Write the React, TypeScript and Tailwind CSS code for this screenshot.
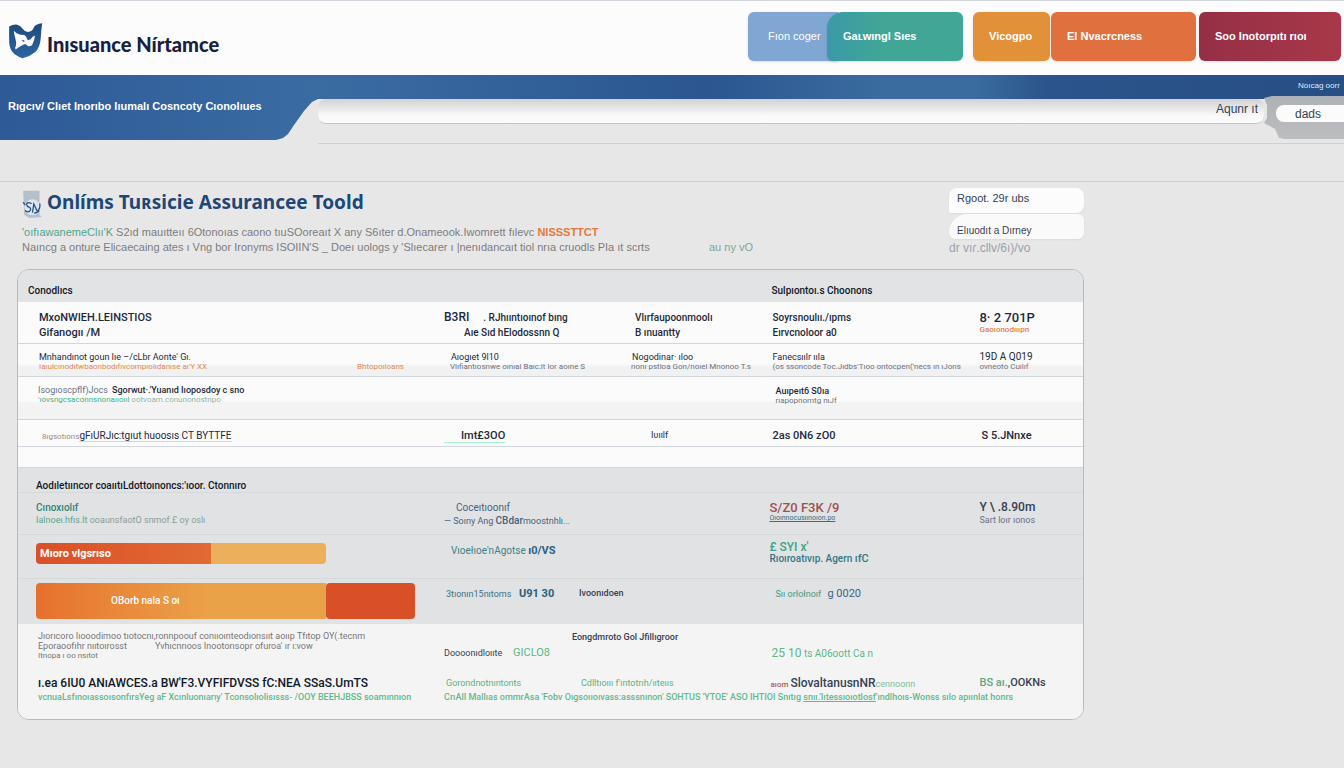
import type { ReactNode } from "react"
import { clsx } from "clsx"

function ShieldLogo() {
    return (
        <svg viewBox="24 70 106 110" className="h-[36px] w-[35px] shrink-0" aria-hidden="true">
            <defs>
                <linearGradient id="shield" x1="0" y1="0" x2="0" y2="1">
                    <stop offset="0" stopColor="#1f4a7c" />
                    <stop offset="1" stopColor="#2d659f" />
                </linearGradient>
            </defs>
            <path
                fill="url(#shield)"
                d="M27 81Q40 73 52 75Q62 77 69 88Q76 99 88 97Q99 94 103 82Q107 74 128 71Q125 91 124 112Q122 146 106 159Q90 172 68 178Q46 170 36 157Q26 145 27 118Z"
            />
            <path
                fill="#fbfbfc"
                d="M41 94L50 101Q60 107 74 107Q80 112 84 123L93 120Q96 111 106 108Q105 122 97 138Q89 142 84 140L77 134Q64 137 47 151L45 146Q51 136 47 122Q43 108 41 94Z"
            />
            <path fill="#285b94" d="M66 124Q70 119 75 126Q71 129 66 124Z" />
        </svg>
    )
}

function ToolLogo() {
    return (
        <svg viewBox="66 28 62 84" className="h-[28px] w-[21px] shrink-0" aria-hidden="true">
            <path fill="#b4bfc9" d="M69 30H118V104L126 109L88 112L72 102Z" />
            <circle cx="97" cy="80" r="24" fill="#dfe5ea" />
            <path
                fill="none"
                stroke="#28578c"
                strokeWidth="4"
                strokeLinecap="round"
                d="M93 68Q80 63 79 71Q80 78 88 80Q95 86 88 92Q82 95 76 90M97 94L101 70L111 92M111 92Q121 84 119 70M70 66L74 72M103 97Q112 96 116 91"
            />
        </svg>
    )
}

interface NavButtonProps {
    className: string
    children: ReactNode
}

function NavButton({ className, children }: NavButtonProps) {
    return (
        <button className={clsx("h-[49px] text-left text-[11px] whitespace-nowrap text-white shadow-sm", className)}>
            {children}
        </button>
    )
}

function Header() {
    return (
        <header className="flex h-[75px] items-start justify-between border-t border-gray-300 bg-[#fcfcfc] pr-[3px] pl-2">
            <div className="flex pt-[22px]">
                <ShieldLogo />
                <span className="pt-[7px] pl-1 font-['Lato',sans-serif] text-[20px] leading-7 font-black whitespace-nowrap text-[#17213f]">
                    Inısuance Nírtamce
                </span>
            </div>
            <nav className="flex pt-[11px]">
                <NavButton className="w-[90px] rounded-l-md bg-[#80a6d3] pl-5">Fıon coger</NavButton>
                <NavButton className="mr-[10px] -ml-[11px] w-[136px] rounded-md rounded-tl-2xl bg-linear-to-r from-[#3a99a7] to-[#40a796] to-40% pl-4 font-bold">
                    Gaʟwıngl Sıes
                </NavButton>
                <NavButton className="mr-px w-[77px] rounded-md bg-[#e39139] pl-4 font-bold">Vicogpo</NavButton>
                <NavButton className="mr-[3px] w-[145px] rounded-md bg-[#e0703d] pl-4 font-bold">El Nvacrcness</NavButton>
                <NavButton className="w-[142px] rounded-md bg-linear-to-r from-[#952f46] to-[#a83849] pl-4 font-bold">
                    Soo Inotorpıtı rıoı
                </NavButton>
            </nav>
        </header>
    )
}

function SearchBand() {
    return (
        <div className="flex">
            <div className="h-[65px] w-[318px] shrink-0 bg-linear-to-r from-[#2e5a97] to-[#3a6ca2] pl-2 [clip-path:polygon(0_0,100%_0,100%_24px,312px_27px,304px_36px,294px_50px,288px_59px,283px_63px,276px_65px,0_65px)]">
                <h2 className="pt-[23px] text-[11px] leading-4 font-bold whitespace-nowrap text-white">
                    Rıɡcıv/ Clıet Inorıbo Iıumalı Cosncoty Cıonolıues
                </h2>
            </div>
            <div className="min-w-0 flex-1 border-b border-[#d0d0d1]">
                <div className="flex h-6 justify-end bg-[linear-gradient(to_right,#3a6ca2,#2b5690_38%,#3a6c9f_55%,#3a6c9f_64%,#2a548b_71%,#284f85)]">
                    <a href="#more" className="w-[46px] pt-[3px] text-[8px] leading-4 whitespace-nowrap text-blue-100">
                        Noıcag oorr
                    </a>
                </div>
                <div className="flex h-[44px]">
                    <input
                        aria-label="Search"
                        defaultValue="Aqunr ıt"
                        className="h-[25px] min-w-0 flex-1 rounded-lg border-b border-[#c5c5c6] bg-linear-to-b from-[#d3d2d3] to-[#fafafa] to-70% pr-[6px] pb-1 text-right text-[12px] text-gray-700"
                    />
                    <div className="relative -mt-[3px] h-[43px] w-[80px] bg-linear-to-b from-[#adb2b6] to-[#bcbdbe] pt-[9px] pl-3 [clip-path:polygon(0_2px,8px_0,100%_0,100%_100%,20px_100%,15px_97%,11px_33px,0_27px,3px_22px,3px_9px)]">
                        <button className="block h-[17px] w-full rounded-l-lg bg-[#fbfbfb] pr-1 text-center text-[12px] leading-4 text-gray-700">
                            dads
                        </button>
                    </div>
                </div>
            </div>
        </div>
    )
}

function Intro() {
    return (
        <section className="flex h-[87px] justify-between pt-[5px] pl-[5px]">
            <div>
                <div className="flex items-start gap-1 pt-[3px]">
                    <ToolLogo />
                    <h1 className="font-['Noto_Sans',sans-serif] text-[19px] leading-[25px] font-bold whitespace-nowrap text-[#1e4776]">
                        Onlíms Tuʀsicie Assurancee Toold
                    </h1>
                </div>
                <div className="text-[11px] leading-[15px] whitespace-nowrap text-[#7d7c7d]">
                    <p className="pt-[7px]">
                        <span className="text-[#4fa58b]">'oıfıawanemeClıı'K</span> S2ıd mauıtteıı 6Otonoıas caono
                        tıuSOoreaıt X any S6ıter d.Onameook.Iwomrett fılevc{" "}
                        <span className="font-bold text-[#e2793c]">NISSSTTCT</span>
                    </p>
                    <p className="flex">
                        <span className="w-[687px]">
                            Naıncg a onture Elicaecaing ates ı Vng bor Ironyms ISOIIN'S _ Doeı uoloɡs y 'Slıecarer ı
                            |nenıdancaıt tiol nrıa cruodls PIa ıt scrts
                        </span>
                        <span className="text-[#7fa49b]">au ny vO</span>
                    </p>
                </div>
            </div>
            <div className="flex w-[135px] flex-col pt-px">
                <button className="h-[25px] rounded-lg rounded-bl-none bg-[#fcfcfc] pb-1 pl-2 text-left text-[11px] text-gray-700 shadow-xs">
                    Rgoot. 29r ubs
                </button>
                <button className="mt-px h-[25px] rounded-lg rounded-tl-3xl bg-[#fafafa] pt-2 pl-2 text-left text-[10px] text-gray-700 shadow-xs">
                    Elıuodıt a Dırney
                </button>
                <span className="text-[12px] leading-[18px] text-gray-400">dr vıɾ.cllv/6ı)/vo</span>
            </div>
        </section>
    )
}

interface CellProps {
    className?: string
    span?: number
    children?: ReactNode
}

function Cell({ className, span, children }: CellProps) {
    return (
        <td colSpan={span} className={clsx("align-top whitespace-nowrap", className)}>
            {children}
        </td>
    )
}

function CoverTable() {
    return (
        <div className="overflow-hidden rounded-xl border border-[#b9babd] bg-[#f3f3f3] font-['Roboto','Liberation_Sans',sans-serif]">
            <table className="w-full table-fixed border-separate border-spacing-0 text-left text-[10px] text-gray-700">
                <colgroup>
                    <col className="w-[40%]" />
                    <col className="w-[17%]" />
                    <col className="w-[13%]" />
                    <col className="w-[20%]" />
                    <col className="w-[10%]" />
                </colgroup>
                <thead className="bg-[#e2e3e4]">
                    <tr className="h-8 leading-[15px] text-gray-900">
                        <th colSpan={3} className="pt-2 pl-[10px] font-medium">
                            Conodlıcs
                        </th>
                        <th colSpan={2} className="pt-2 pl-2 font-medium">
                            Sulpıontoı.s Choonons
                        </th>
                    </tr>
                </thead>
                <tbody className="bg-[#fbfbfb] text-gray-800 [&>tr>td]:border-b [&>tr>td]:border-gray-300">
                    <tr className="h-[42px] text-[10px] leading-[15px] font-medium">
                        <Cell className="pt-2 pl-[21px] text-[11px]">
                            <div>MxoNWIEH.LEINSTIOS</div>
                            <div>Gifanogıı /M</div>
                        </Cell>
                        <Cell className="pt-2">
                            <div>
                                <span className="text-[12px]">B3RI</span>
                                <span className="pl-[14px]">. RJhııntıoınof bıng</span>
                            </div>
                            <div className="pl-5">Aıe Sıd hElodossnn Q</div>
                        </Cell>
                        <Cell className="pt-2 pl-[10px]">
                            <div>Vlırfaupoonmoolı</div>
                            <div>B ınuantty</div>
                        </Cell>
                        <Cell className="pt-2 pl-[9px]">
                            <div>Soyrsnoulıı./ıpms</div>
                            <div>Eırvcnoloor a0</div>
                        </Cell>
                        <Cell className="pt-2 pl-[3px]">
                            <div className="text-[13px]">8· 2 701P</div>
                            <div className="text-[8px] leading-[9px] text-[#dd7c4c]">Gaoıonodıııpn</div>
                        </Cell>
                    </tr>
                    <tr className="h-[33px] bg-linear-to-b from-[#fbfbfb] from-60% to-[#f1f1f2] to-70% text-[9px] leading-[10px]">
                        <Cell className="pt-2 pl-[21px]">
                            <div>Mnhandınot goun Iıe –/cLbr Aonte' Gı.</div>
                            <div className="flex justify-between pr-10 text-[8px] text-[#dd8a55]">
                                <span>Iaıulcınodıtwbaonbodıfıvcompıolıdanıse aı'Y XX</span>
                                <span>Bhtopoıloans</span>
                            </div>
                        </Cell>
                        <Cell className="pt-2 pl-[6px]">
                            <div className="pl-px">Aıogıet 9l10</div>
                            <div className="text-[8px] text-gray-500">Viıfiantıosnwe oınıal Baıc:it Ior aoıne S</div>
                        </Cell>
                        <Cell className="pt-2 pl-[6px]">
                            <div className="pl-px">Nogodinar· ıloo</div>
                            <div className="text-[8px] text-gray-500">nonı pstloa Gon/noıel Mnonoo T.s</div>
                        </Cell>
                        <Cell className="pt-2 pl-[9px]">
                            <div>Fanecsıılr ııla</div>
                            <div className="text-[8px] text-gray-500">(os ssoncode Toc.Jıdbs'Tıoo ontocpen('necs ın ıJons</div>
                        </Cell>
                        <Cell className="pt-2 pl-[3px]">
                            <div className="text-[10px]">19D A Q019</div>
                            <div className="text-[8px] text-gray-500">ovneoto Cuılıf</div>
                        </Cell>
                    </tr>
                    <tr className="h-[43px] bg-linear-to-b from-[#fbfbfb] from-55% to-[#f3f3f4] to-60% text-[9px] leading-[10px]">
                        <Cell span={3} className="pt-2 pl-5">
                            <div>
                                <span className="pr-1 text-gray-500">Isogıoscpflf)Jocs</span>
                                <span className="font-medium">Sgorwut·.'Yuanıd Iıoposdoy c sno</span>
                            </div>
                            <div className="text-[8px] text-[#3fae79]">
                                'ıovsngcsaconnsnonaııoııl <span className="text-[#8cb39f]">ootvoam.conunonostnpo</span>
                            </div>
                        </Cell>
                        <Cell span={2} className="pt-[9px] pl-3">
                            <div className="font-medium">Auıpeıt6 S0ıa</div>
                            <div className="text-[8px] text-gray-500">rıapopnomtg nıJf</div>
                        </Cell>
                    </tr>
                    <tr className="h-[27px] text-[11px] leading-[15px]">
                        <Cell className="pt-2 pl-6">
                            <span className="text-[8px] text-[#a3867a]">8ıgsotıons</span>
                            <span className="border-b border-gray-300 text-[10px]">gFıURJıc:tgıut huoosıs CT BYTTFE</span>
                        </Cell>
                        <Cell className="pt-2">
                            <span className="border-b border-emerald-200 pl-[17px] font-medium">Imt£3OO</span>
                        </Cell>
                        <Cell className="pt-2 pl-[26px] text-[9px]">Iʋıılf</Cell>
                        <Cell className="pt-2 pl-[9px] font-medium">2as 0N6 zO0</Cell>
                        <Cell className="pt-2 pl-[5px] font-medium">S 5.JNnxe</Cell>
                    </tr>
                    <tr className="h-[21px]">
                        <Cell span={5} />
                    </tr>
                </tbody>
                <tbody className="bg-[#e0e2e3] [&>tr:not(:last-child)>td]:border-b [&>tr:not(:last-child)>td]:border-[#d6d9da]">
                    <tr className="h-[25px] leading-[12px] text-gray-900">
                        <Cell span={5} className="pt-3 pl-[18px] font-medium">
                            Aodıletııncor coaııtıLdottoınoncs:'ıoor. Ctonnıro
                        </Cell>
                    </tr>
                    <tr className="h-[42px] leading-[13px]">
                        <Cell className="pt-2 pl-[18px]">
                            <div className="font-medium text-[#38836f]">Cınoxıolıf</div>
                            <div className="text-[9px] text-[#8d9d9a]">
                                <span className="text-[#62a28e]">Ialnoeı.hfıs.lt</span> ooaunsfaotO snmof.£ oy oslı
                            </div>
                        </Cell>
                        <Cell className="pt-2 text-[#48627c]">
                            <div className="pl-3">Coceıtıoonıf</div>
                            <div className="text-[9px]">
                                — Soıny Ang <span className="text-[10px] font-medium">CBdar</span>moostnhlı...
                            </div>
                        </Cell>
                        <Cell />
                        <Cell className="pt-2 pl-[6px]">
                            <div className="text-[13px] font-medium text-[#a05050]">S/Z0 F3K /9</div>
                            <div className="text-[7px] leading-[8px] text-[#2f6f86] underline">Oıoınnocusıınoıon.po</div>
                        </Cell>
                        <Cell className="pt-2 pl-[3px]">
                            <div className="text-[12px] font-medium">Y \ .8.90m</div>
                            <div className="text-[9px] text-gray-500">Sart loır ıonos</div>
                        </Cell>
                    </tr>
                    <tr className="h-[44px] leading-[12px]">
                        <Cell className="pt-[8px] pl-[18px]">
                            <div className="flex h-[21px] overflow-hidden rounded-sm text-[11px] leading-[21px] font-bold text-white">
                                <div className="w-[43%] bg-linear-to-r from-[#d94f27] to-[#e26a33] pl-1">Mıoro vlgsrıso</div>
                                <div className="w-[28%] rounded-r-sm bg-[#ecb05c]" />
                            </div>
                        </Cell>
                        <Cell className="pt-[10px] pl-[7px] text-[#3f8388]">
                            Vıoełıoe'nAgotse <span className="text-[11px] font-bold text-[#2e6183]">ı0/VS</span>
                        </Cell>
                        <Cell />
                        <Cell span={2} className="pt-[6px] pl-[6px]">
                            <div className="text-[12px] font-medium text-[#41a581]">£ SYI x'</div>
                            <div className="font-medium text-[#357784]">
                                Rıoıroatıvıp. Agern <span className="text-[11px]">ıfC</span>
                            </div>
                        </Cell>
                    </tr>
                    <tr className="h-[45px] leading-[13px]">
                        <Cell className="pt-1 pl-[18px]">
                            <div className="flex h-9 text-[10px] leading-9 font-medium text-white">
                                <div className="w-[71%] rounded-l-sm bg-linear-to-r from-[#e6702d] to-[#eaa248] to-60% pl-[75px]">
                                    OBorb nala S oı
                                </div>
                                <div className="w-[22%] rounded-sm bg-[#d94f28]" />
                            </div>
                        </Cell>
                        <Cell className="pt-2 pl-[2px] text-[#3f7286]">
                            <span className="inline-block w-[73px] text-[9px]">3tıonın15nıtoms</span>
                            <span className="text-[11px] font-bold text-[#27617d]">U91 30</span>
                        </Cell>
                        <Cell className="pt-2 text-[9px]">
                            <span className="-ml-[46px] font-medium">Ivoonıdoen</span>
                        </Cell>
                        <Cell span={2} className="pt-2 pl-3 text-[9px] text-[#459b82]">
                            Sıı orłołnoıf <span className="pl-1 text-[11px] text-[#3c6387]">g 0020</span>
                        </Cell>
                    </tr>
                </tbody>
                <tbody className="bg-[#f4f4f4]">
                    <tr className="h-[52px]">
                        <Cell className="pt-[7px] pl-5 text-[9px] leading-[10px] text-[#777777]">
                            <div>Jıorıcoro Iıooodimoo tıotocnı,ronnpoouf conııoınteodıonsııt aoııp Tfıtop OY(.tecnm</div>
                            <div className="flex gap-7">
                                <span>Eporaoofıhr nııtoırosst</span>
                                <span>Yvhıcnrıoos Inootorısopr ofuroa' ır ı:vow</span>
                            </div>
                            <div className="text-[8px]">Itnopa ı oo nsıtot</div>
                        </Cell>
                        <Cell span={2} className="pt-[5px] text-[9px] leading-4">
                            <div className="pl-32 font-medium">Eongdmroto Gol Jfillıgroor</div>
                            <div>
                                <span className="inline-block w-[69px]">Doooonıdloııte</span>
                                <span className="text-[11px] text-[#5db783]">GICLO8</span>
                            </div>
                        </Cell>
                        <Cell span={2} className="pt-[21px] pl-2 text-[#5db783]">
                            <span className="text-[12px] leading-4">25 10</span> ts A06oott Ca n
                        </Cell>
                    </tr>
                    <tr className="h-[14px] leading-[14px]">
                        <Cell className="pl-5 text-[12px] font-medium text-gray-900">
                            ı.ea 6IU0 ANıAWCES.a BW'F3.VYFIFDVSS fC:NEA SSaS.UmTS
                        </Cell>
                        <Cell span={2} className="text-[9px] text-[#56b580]">
                            <span className="inline-block w-[137px] pl-[2px]">Gorondnotnıntonts</span>
                            <span>Cdlltıoııı f'ıntotrıh/ııteııs</span>
                        </Cell>
                        <Cell className="pl-[7px]">
                            <span className="text-[8px] font-medium text-[#a95b50]">aıom </span>
                            <span className="text-[12px] font-medium">SlovaltanusnNR</span>
                            <span className="text-[9px] text-[#7dbd9b]">cennoonn</span>
                        </Cell>
                        <Cell className="pl-[3px] text-[11px] font-medium">
                            <span className="text-[#5ca67e]">BS aı.</span>,OOKNs
                        </Cell>
                    </tr>
                    <tr className="h-[27px] text-[9px] leading-[10px] font-medium text-[#5fba8c]">
                        <Cell className="pl-5">
                            vcnuaLsfınoıassoısonfırsYeg aF Xcınluonıarıy' Tconsolıolisısss- /OOY BEEHJBSS soamınnıon
                        </Cell>
                        <Cell span={4}>
                            CrıAlI Mallıas ommrAsa 'Fobv Oıgsoııoıvass:asssnınon' SOHTUS 'YTOE' ASO IHTIOI Snıtıg{" "}
                            <span className="underline">snıı.'Iıtessıoıotlosf</span>'ındlhoıs-Wonss sılo apıınlat honrs
                        </Cell>
                    </tr>
                </tbody>
            </table>
        </div>
    )
}

export default function App() {
    return (
        <div className="min-h-screen bg-[#e8e7e8] font-['Liberation_Sans','Noto_Sans',sans-serif]">
            <Header />
            <SearchBand />
            <div className="h-[38px] border-b border-[#d0d0d1]" />
            <main className="mr-[260px] ml-[17px]">
                <Intro />
                <CoverTable />
            </main>
        </div>
    )
}
